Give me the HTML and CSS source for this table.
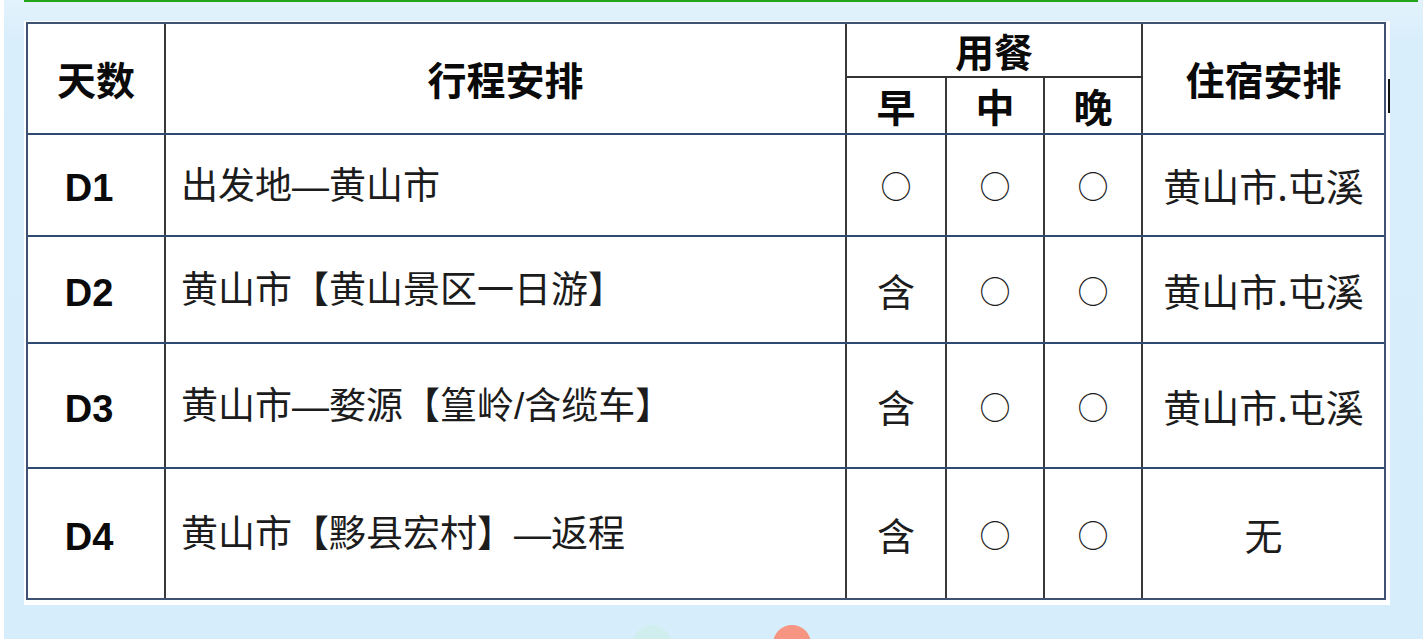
FILE: index.html
```html
<!DOCTYPE html>
<html lang="zh-CN">
<head>
<meta charset="utf-8">
<title>行程安排</title>
<link rel="stylesheet" href="styles.css">
</head>
<body>
<div class="page">
  <div class="green-box"></div>
  <div class="panel">
    <div class="frame">
      <table class="trip">
        <colgroup>
          <col class="c-day"><col class="c-plan"><col class="c-meal"><col class="c-meal2"><col class="c-meal3"><col class="c-stay">
        </colgroup>
        <thead>
          <tr class="h1">
            <th rowspan="2">天数</th>
            <th rowspan="2">行程安排</th>
            <th colspan="3" class="meal-head">用餐</th>
            <th rowspan="2">住宿安排</th>
          </tr>
          <tr class="h2">
            <th>早</th><th>中</th><th>晚</th>
          </tr>
        </thead>
        <tbody>
          <tr class="r1">
            <td class="day">D1</td>
            <td class="plan">出发地—黄山市</td>
            <td class="o">○</td><td class="o">○</td><td class="o">○</td>
            <td>黄山市.屯溪</td>
          </tr>
          <tr class="r2">
            <td class="day">D2</td>
            <td class="plan">黄山市【黄山景区一日游】</td>
            <td>含</td><td class="o">○</td><td class="o">○</td>
            <td>黄山市.屯溪</td>
          </tr>
          <tr class="r3">
            <td class="day">D3</td>
            <td class="plan">黄山市—婺源【篁岭/含缆车】</td>
            <td>含</td><td class="o">○</td><td class="o">○</td>
            <td>黄山市.屯溪</td>
          </tr>
          <tr class="r4">
            <td class="day">D4</td>
            <td class="plan">黄山市【黟县宏村】—返程</td>
            <td>含</td><td class="o">○</td><td class="o">○</td>
            <td>无</td>
          </tr>
        </tbody>
      </table>
    </div>
  </div>
  <div class="dot dot-teal"></div>
  <div class="dot dot-salmon"></div>
</div>
</body>
</html>
```

FILE: styles.css
```css
html, body {
  margin: 0;
  padding: 0;
  background: #ffffff;
}
body {
  width: 1423px;
  height: 639px;
  overflow: hidden;
  font-family: "Noto Sans CJK SC", "Noto Sans", sans-serif;
}
.page {
  position: relative;
  margin-left: 4px;
  height: 639px;
  overflow: hidden;
  background: linear-gradient(180deg, #e3f2fc 0px, #d8eefb 40px, #d6edfb 100%);
}
.green-box {
  margin-left: 20px;
  width: 1390px;
  height: 0px;
  border: 2px solid #23a51b;
  border-top: none;
  margin-top: -1px;
  padding-top: 1px;
}
.panel {
  position: relative;
  margin-top: 19px;
  margin-left: 20px;
  width: 1366px;
  background: #ffffff;
  padding: 1px 0 5px 2px;
  box-sizing: border-box;
}
.panel::after {
  content: "";
  position: absolute;
  right: 0;
  top: 58px;
  width: 2px;
  height: 34px;
  background: #111111;
}
.frame {
  width: 1356px;
  border: 2px solid #3f5273;
}
.trip {
  width: 1356px;
  table-layout: fixed;
  border-collapse: collapse;
  border-style: hidden;
  color: #1c1c1c;
}
.c-day { width: 137px; }
.c-plan { width: 681px; }
.c-meal { width: 100px; }
.c-meal2 { width: 98px; }
.c-meal3 { width: 98px; }
.c-stay { width: 242px; }

.trip th,
.trip td {
  border-left: 2px solid #383838;
  border-right: 2px solid #383838;
  border-top: 2px solid #2f4a70;
  border-bottom: 2px solid #2f4a70;
  padding: 0;
  text-align: center;
  vertical-align: middle;
  font-size: 38px;
  line-height: 1.2;
}
.trip th {
  font-weight: bold;
  color: #0a0a0a;
  font-size: 39px;
}
.trip thead tr.h1 th.meal-head {
  border-bottom: 2px solid #333333;
  vertical-align: bottom;
  line-height: 1.3;
}
.trip thead tr.h2 th {
  border-bottom: 2px solid #2f4a70;
}
.h1 { height: 53px; }
.h2 { height: 57px; }
.r1 { height: 102px; }
.r2 { height: 107px; }
.r3 { height: 125px; }
.r4 { height: 130px; }

.trip td.day {
  font-family: "Liberation Sans", Arial, sans-serif;
  font-weight: bold;
  font-size: 38px;
  color: #0a0a0a;
  padding-right: 14px;
  padding-top: 8px;
}
.trip td.plan {
  text-align: left;
  padding-left: 15px;
  padding-top: 4px;
  font-size: 37px;
  font-family: "Liberation Sans", "Noto Sans CJK SC", sans-serif;
}
.trip td.o {
  font-size: 31px;
}
.dot {
  position: absolute;
  top: 625px;
  width: 38px;
  height: 38px;
  border-radius: 50%;
}
.dot-teal {
  left: 629px;
  background: #d0eeed;
}
.dot-salmon {
  left: 769px;
  background: #f59582;
}
```
